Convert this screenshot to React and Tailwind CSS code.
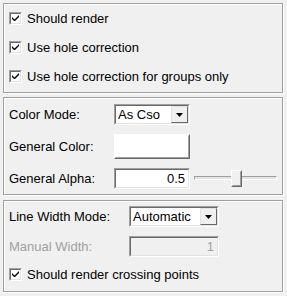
import React from "react";

function Check({ label }) {
  return (
    <div className="flex items-center h-[29px] pl-[5px]">
      <div className="w-[13px] h-[13px] border border-t-[#a0a0a0] border-l-[#a0a0a0] border-b-white border-r-white">
        <div className="w-full h-full border border-t-[#696969] border-l-[#696969] border-b-[#e3e3e3] border-r-[#e3e3e3] bg-white flex items-center justify-center">
          <svg width="7" height="7" viewBox="0 0 7 7">
            <path d="M0 2 L0 4 L2 6 L3 6 L7 2 L7 0 L2.5 4.5 Z" fill="black" />
          </svg>
        </div>
      </div>
      <span className="ml-[5px] text-[13px] text-black leading-none">{label}</span>
    </div>
  );
}

function Sunken({ className, children, inner = "" }) {
  return (
    <div className={"border border-t-[#a0a0a0] border-l-[#a0a0a0] border-b-white border-r-white " + className}>
      <div className={"w-full h-full border border-t-[#696969] border-l-[#696969] border-b-[#e3e3e3] border-r-[#e3e3e3] " + inner}>
        {children}
      </div>
    </div>
  );
}

function Combo({ w, text }) {
  return (
    <Sunken className={w + " h-[21px]"} inner="bg-white flex items-center">
      <span className="flex-1 pl-[2px] text-[13px] leading-none text-black">{text}</span>
      <div className="w-[17px] h-[17px] bg-[#f0f0f0] border border-t-[#e3e3e3] border-l-[#e3e3e3] border-b-[#696969] border-r-[#696969] flex items-center justify-center">
        <svg width="7" height="4" viewBox="0 0 7 4">
          <path d="M0 0 H7 L3.5 4 Z" fill="black" />
        </svg>
      </div>
    </Sunken>
  );
}

function Panel({ className, children }) {
  return (
    <div className={"border border-[#a0a0a0] shadow-[1px_1px_0_0_#ffffff,inset_1px_1px_0_0_#ffffff] " + className}>
      {children}
    </div>
  );
}

export default function App() {
  return (
    <div
      className="w-[287px] h-[296px] bg-[#f0f0f0] px-[3px] pt-[3px] flex flex-col"
      style={{ fontFamily: '"Liberation Sans", Arial, sans-serif' }}
    >
      <Panel className="h-[90px] w-[280px]">
        <Check label="Should render" />
        <Check label="Use hole correction" />
        <Check label="Use hole correction for groups only" />
      </Panel>
      <Panel className="mt-[4px] h-[98px] w-[280px] pl-[5px] pt-[6px] flex flex-col">
        <div className="flex items-center h-[21px]">
          <span className="w-[105px] text-[13px] leading-none">Color Mode:</span>
          <Combo w="w-[76px]" text="As Cso" />
        </div>
        <div className="flex items-center h-[25px] mt-[9px]">
          <span className="w-[105px] text-[13px] leading-none">General Color:</span>
          <div className="w-[76px] h-[25px] bg-white border border-t-white border-l-white border-b-[#696969] border-r-[#696969]">
            <div className="w-full h-full border border-b-[#a0a0a0] border-r-[#a0a0a0] border-t-white border-l-white" />
          </div>
        </div>
        <div className="flex items-center h-[21px] mt-[9px]">
          <span className="w-[105px] text-[13px] leading-none">General Alpha:</span>
          <Sunken className="w-[76px] h-[21px]" inner="bg-white flex items-center justify-end pr-[3px]">
            <span className="text-[13px] leading-none">0.5</span>
          </Sunken>
          <div className="relative ml-[4px] w-[83px] h-[21px]">
            <div className="absolute left-0 right-0 top-[8px] h-[4px] border border-t-[#a0a0a0] border-l-[#a0a0a0] border-b-white border-r-white bg-[#e3e3e3]" />
            <div className="absolute left-[37px] top-[2px] w-[11px] h-[17px] bg-[#f0f0f0] border border-t-white border-l-white border-b-[#696969] border-r-[#696969]">
              <div className="w-full h-full border border-b-[#a0a0a0] border-r-[#a0a0a0] border-t-transparent border-l-transparent" />
            </div>
          </div>
        </div>
      </Panel>
      <Panel className="mt-[5px] h-[92px] w-[280px] pl-[5px] pt-[5px] flex flex-col">
        <div className="flex items-center h-[21px]">
          <span className="w-[120px] text-[13px] leading-none">Line Width Mode:</span>
          <Combo w="w-[90px]" text="Automatic" />
        </div>
        <div className="flex items-center h-[21px] mt-[9px]">
          <span className="w-[120px] text-[13px] leading-none text-[#a0a0a0]">Manual Width:</span>
          <Sunken className="w-[90px] h-[21px]" inner="bg-[#f0f0f0] flex items-center justify-end pr-[3px]">
            <span className="text-[13px] leading-none text-[#a0a0a0]">1</span>
          </Sunken>
        </div>
        <div className="-ml-[5px] mt-[3px]">
          <Check label="Should render crossing points" />
        </div>
      </Panel>
    </div>
  );
}
